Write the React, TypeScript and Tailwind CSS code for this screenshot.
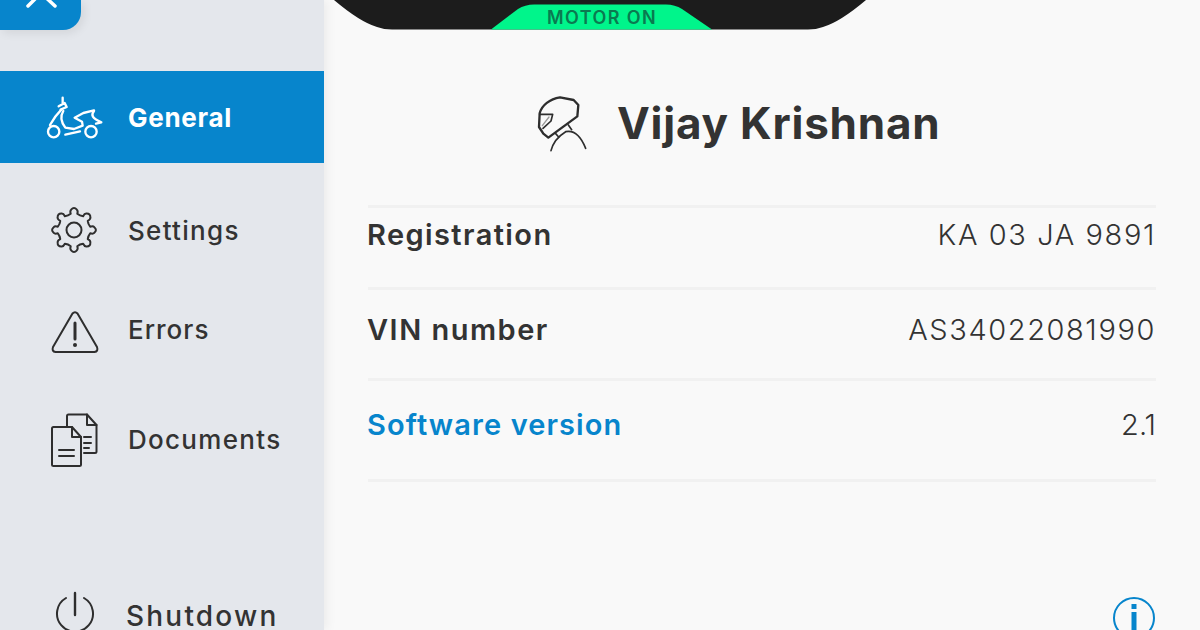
/**
 * App.tsx - Vehicle info screen with side menu
 */

const gearPath = (() => {
  // 8 rounded teeth round the centre of a 48 box
  const pts: string[] = [];
  const teeth = 8;
  for (let i = 0; i < teeth; i++) {
    const a = (i / teeth) * Math.PI * 2 - Math.PI / 2;
    const step = (Math.PI * 2) / teeth;
    const p = (r: number, d: number) =>
      `${(24 + r * Math.cos(a + d)).toFixed(2)} ${(24 + r * Math.sin(a + d)).toFixed(2)}`;
    pts.push(
      `${i === 0 ? "M" : "L"}${p(16.5, -0.2)}`,
      `Q${p(19.5, -0.22)} ${p(20.5, -0.14)}`,
      `Q${p(23.5, 0)} ${p(20.5, 0.14)}`,
      `Q${p(19.5, 0.22)} ${p(16.5, 0.2)}`,
      `Q${p(15.2, step / 2)} ${p(16.5, step - 0.2)}`,
    );
  }
  return pts.join(" ") + " Z";
})();

function ScooterIcon() {
  return (
    <svg viewBox="0 0 270 180" className="w-[90px] h-[60px] shrink-0" fill="none" stroke="white" strokeWidth="7" strokeLinecap="round" strokeLinejoin="round">
      <circle cx="71" cy="134" r="17" />
      <circle cx="183" cy="134" r="17" />
      <path d="M98 32V46" />
      <path d="M86 58L104 48L110 60L92 68" />
      <path d="M94 68C82 80 70 96 60 114" />
      <path d="M100 72C90 88 94 106 106 122L132 126L158 116L156 104L134 92L160 78L192 70" />
      <path d="M192 72C182 84 186 94 214 106L198 110" />
      <path d="M106 143L150 133" />
    </svg>
  );
}

function GearIcon() {
  return (
    <svg viewBox="0 0 48 48" className="w-[48px] h-[48px] shrink-0" fill="none" stroke="#2e2e2e" strokeWidth="2" strokeLinejoin="round">
      <path d={gearPath} />
      <circle cx="24" cy="24" r="7.5" />
    </svg>
  );
}

function WarningIcon() {
  return (
    <svg viewBox="0 0 48 44" className="w-[48px] h-[44px] shrink-0 mt-[6px]" fill="none" stroke="#2e2e2e" strokeWidth="2" strokeLinejoin="round" strokeLinecap="round">
      <path d="M21.5 3.5Q24 .8 26.5 3.5L46 37Q47.5 41.5 43.5 42H4.5Q.5 41.5 2 37Z" />
      <path d="M24 13V29" strokeWidth="3" />
      <circle cx="24" cy="35" r="2" fill="#2e2e2e" stroke="none" />
    </svg>
  );
}

function DocumentsIcon() {
  return (
    <svg viewBox="0 0 48 54" className="w-[48px] h-[54px] shrink-0 mt-[2px]" fill="none" stroke="#2e2e2e" strokeWidth="2" strokeLinejoin="round" strokeLinecap="round">
      <path d="M17 13V3Q17 1.5 18.500 1.500H37L46.500 12V38.500Q46.500 40 45 40H34" />
      <path d="M37 1.500V12H46.500" />
      <path d="M34 24H41M34 30H41M34 35H39" />
      <path d="M2 15.500Q2 14 3.500 14H22L31 24V52Q31 53 29.500 53H3.500Q2 53 2 52Z" />
      <path d="M22 14V24H31" />
      <path d="M9 37H24M9 43H24" />
    </svg>
  );
}

function PowerIcon() {
  return (
    <svg viewBox="0 0 40 40" className="w-[40px] h-[40px] shrink-0" fill="none" stroke="#2e2e2e" strokeWidth="2" strokeLinecap="round">
      <path d="M20 2V24" strokeWidth="2.400" />
      <path d="M11 7A18 18 0 1 0 29 7" />
    </svg>
  );
}

function RiderIcon() {
  return (
    <svg viewBox="0 0 225 225" className="w-[75px] h-[75px] shrink-0" fill="none" stroke="#2e2e2e" strokeWidth="7" strokeLinejoin="round" strokeLinecap="round">
      <path d="M44 85C50 60 75 42 105 37L146 45L160 60L157 94L70 158L55 146L42 126Z" />
      <path d="M44 88H83L78 108L54 130" strokeWidth="5" />
      <path d="M52 122L72 96" strokeWidth="4" stroke="#9a9a9a" />
      <path d="M92 146L101 156M130 120L140 134" strokeWidth="5" />
      <path d="M78 197C84 172 96 156 122 140C150 134 170 160 182 190" strokeWidth="5" />
    </svg>
  );
}

function MotorStatus() {
  return (
    <div className="relative w-[540px] h-[30px] ml-[6px] shrink-0">
      <svg viewBox="0 0 540 30" className="absolute inset-0 w-full h-full">
        <path d="M0 -10L4 0Q30 22 47 27Q54 29.500 62 29.500H478Q486 29.500 493 27Q510 22 536 0L540 -10Z" fill="#1c1c1c" />
        <path d="M161 29.500L188 9Q195 4.500 204 4.500H336Q345 4.500 352 9L382 29.500Z" fill="#00f58b" />
      </svg>
      <span className="absolute left-[217px] top-[8px] text-[18px] leading-[20px] font-semibold text-[#0b7a50] tracking-[1.400px] font-['Inter',sans-serif]">
        MOTOR ON
      </span>
    </div>
  );
}

const rows = [
  { label: "Registration", value: "KA 03 JA 9891", height: "h-[82px] pb-[26px]", labelTracking: "tracking-[1.4px]", tracking: "tracking-[1.6px]", blue: false },
  { label: "VIN number", value: "AS34022081990", height: "h-[91px] pb-[8px]", labelTracking: "tracking-[1.5px]", tracking: "tracking-[1.6px]", blue: false },
  { label: "Software version", value: "2.1", height: "h-[101px] pb-[10px]", labelTracking: "tracking-[1.1px]", tracking: "tracking-[0px]", blue: true },
];

export default function App() {
  return (
    <div className="w-[1200px] h-[630px] flex overflow-hidden bg-[#f9f9f9] font-['Inter',sans-serif] text-[#333333]">
      {/* Side menu */}
      <aside className="w-[324px] h-full shrink-0 flex flex-col bg-[#e4e7ec] shadow-[3px_0_10px_rgba(0,0,0,0.06)] z-10">
        <div className="w-[81px] h-[30px] shrink-0 rounded-br-[18px] bg-[#0785cc] shadow-[3px_3px_10px_rgba(0,0,0,0.08)] overflow-hidden">
          <svg viewBox="0 0 81 30" className="w-full h-full" fill="none" stroke="white" strokeWidth="3.500" strokeLinecap="round">
            <path d="M28 6L41 -7L55 6" />
          </svg>
        </div>

        <div className="mt-[41px] h-[92px] shrink-0 flex items-center bg-[#0785cc] text-white">
          <div className="ml-[30px] w-[98px] shrink-0">
            <ScooterIcon />
          </div>
          <span className="text-[26px] font-bold tracking-[0.7px]">General</span>
        </div>

        <div className="mt-[21px] h-[92px] shrink-0 flex items-center pl-[50px] gap-[30px] text-[26px] font-medium text-[#333333] tracking-[1.3px]">
          <GearIcon />
          <span>Settings</span>
        </div>
        <div className="mt-[7px] h-[92px] shrink-0 flex items-center pl-[51px] gap-[29px] text-[26px] font-medium tracking-[1px]">
          <WarningIcon />
          <span>Errors</span>
        </div>
        <div className="mt-[18px] h-[92px] shrink-0 flex items-center pl-[50px] gap-[30px] text-[26px] font-medium tracking-[1.3px]">
          <DocumentsIcon />
          <span>Documents</span>
        </div>
        <div className="mt-[98px] h-[47px] shrink-0 flex items-start pl-[55px] gap-[31px] text-[28px] leading-[26px] font-medium tracking-[2.2px]">
          <div className="mt-[8px]">
            <PowerIcon />
          </div>
          <span className="mt-[20px]">Shutdown</span>
        </div>
      </aside>

      {/* Vehicle details */}
      <main className="flex-1 flex flex-col">
        <MotorStatus />

        <div className="mt-[55px] h-[75px] shrink-0 flex items-center pl-[201px] gap-[17px]">
          <RiderIcon />
          <h1 className="text-[44px] font-bold tracking-[0.77px] leading-none">Vijay Krishnan</h1>
        </div>

        <div className="mt-[45px] ml-[44px] mr-[44px] flex flex-col border-t-[3px] border-[#f1f1f1]">
          {rows.map((row) => (
            <div key={row.label} className={`${row.height} flex items-center justify-between border-b-[3px] border-[#f1f1f1]`}>
              <span className={`text-[29px] font-semibold -ml-[1px] ${row.labelTracking} ${row.blue ? "text-[#0785cc]" : ""}`}>
                {row.label}
              </span>
              <span className={`text-[29px] font-light text-[#333333] ${row.tracking}`}>{row.value}</span>
            </div>
          ))}
        </div>

        <div className="mt-[114px] mr-[44px] flex justify-end">
          <svg viewBox="0 0 44 44" className="w-[44px] h-[44px]" fill="none">
            <circle cx="22" cy="22" r="20" stroke="#0785cc" strokeWidth="2" />
            <rect x="19.500" y="8" width="5" height="5" fill="#0785cc" />
            <rect x="19.500" y="16" width="5" height="18" fill="#0785cc" />
          </svg>
        </div>
      </main>
    </div>
  );
}
